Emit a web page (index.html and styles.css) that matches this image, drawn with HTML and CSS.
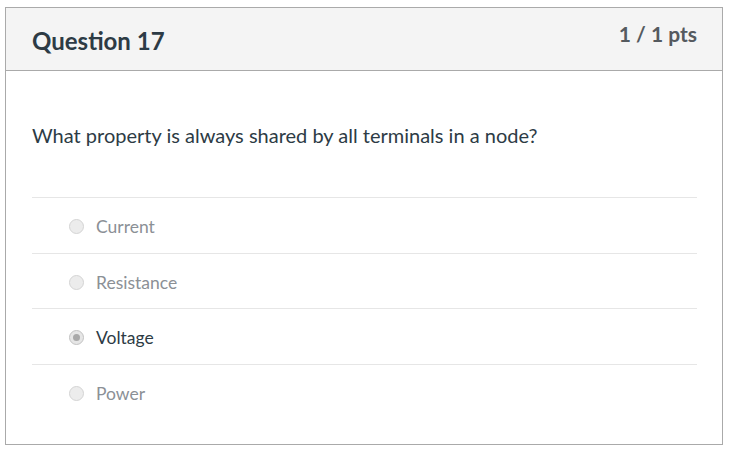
FILE: index.html
```html
<!DOCTYPE html>
<html>
<head>
<meta charset="utf-8">
<link rel="stylesheet" href="styles.css">
</head>
<body>
<div class="question">
  <div class="header">
    <h2 class="title">Question 17</h2>
    <div class="points">1 / 1 pts</div>
  </div>
  <div class="content">
    <p class="text">What property is always shared by all terminals in a node?</p>
    <ul class="answers">
      <li class="answer"><span class="radio"></span><span class="label">Current</span></li>
      <li class="answer"><span class="radio"></span><span class="label">Resistance</span></li>
      <li class="answer selected"><span class="radio"></span><span class="label">Voltage</span></li>
      <li class="answer"><span class="radio"></span><span class="label">Power</span></li>
    </ul>
  </div>
</div>
</body>
</html>
```
FILE: styles.css
```css
html, body {
  margin: 0;
  padding: 0;
  background: #fff;
}
body {
  padding: 7px 8px 0 5px;
  font-family: Lato, "Open Sans", sans-serif;
  color: #2d3b45;
}
.question {
  width: 718px;
  height: 438px;
  box-sizing: border-box;
  border: 1px solid #aaaaaa;
}
.header {
  height: 63px;
  box-sizing: border-box;
  background: #f4f4f4;
  border-bottom: 1px solid #aaaaaa;
  display: flex;
  justify-content: space-between;
  align-items: flex-start;
  padding: 0 25px 0 26px;
}
.title {
  margin: 19px 0 0;
  font-size: 24px;
  font-weight: 700;
  line-height: 28px;
  color: #2d3b45;
}
.points {
  margin-top: 13px;
  font-size: 21px;
  font-weight: 700;
  line-height: 26px;
  color: #555a5f;
}
.content {
  padding: 0 25px 0 26px;
}
.text {
  margin: 50px 0 0;
  font-size: 20px;
  line-height: 28px;
  height: 76px;
  color: #2d3b45;
}
.answers {
  list-style: none;
  margin: 0;
  padding: 0;
}
.answer {
  display: flex;
  align-items: center;
  height: 55.5px;
  box-sizing: border-box;
  border-top: 1px solid #e6e6e6;
  padding: 3px 0 0 37px;
  font-size: 17.5px;
  color: #8b9096;
}
.answer.selected {
  color: #2d3b45;
}
.radio {
  width: 15px;
  height: 15px;
  box-sizing: border-box;
  border-radius: 50%;
  border: 1px solid #d4d4d4;
  background: #ececec;
  margin-right: 12px;
  display: flex;
  align-items: center;
  justify-content: center;
}
.selected .radio {
  border-color: #c2c2c2;
  background: #e6e6e6;
}
.selected .radio::after {
  content: "";
  width: 7px;
  height: 7px;
  border-radius: 50%;
  background: #a9a9a9;
}
```
